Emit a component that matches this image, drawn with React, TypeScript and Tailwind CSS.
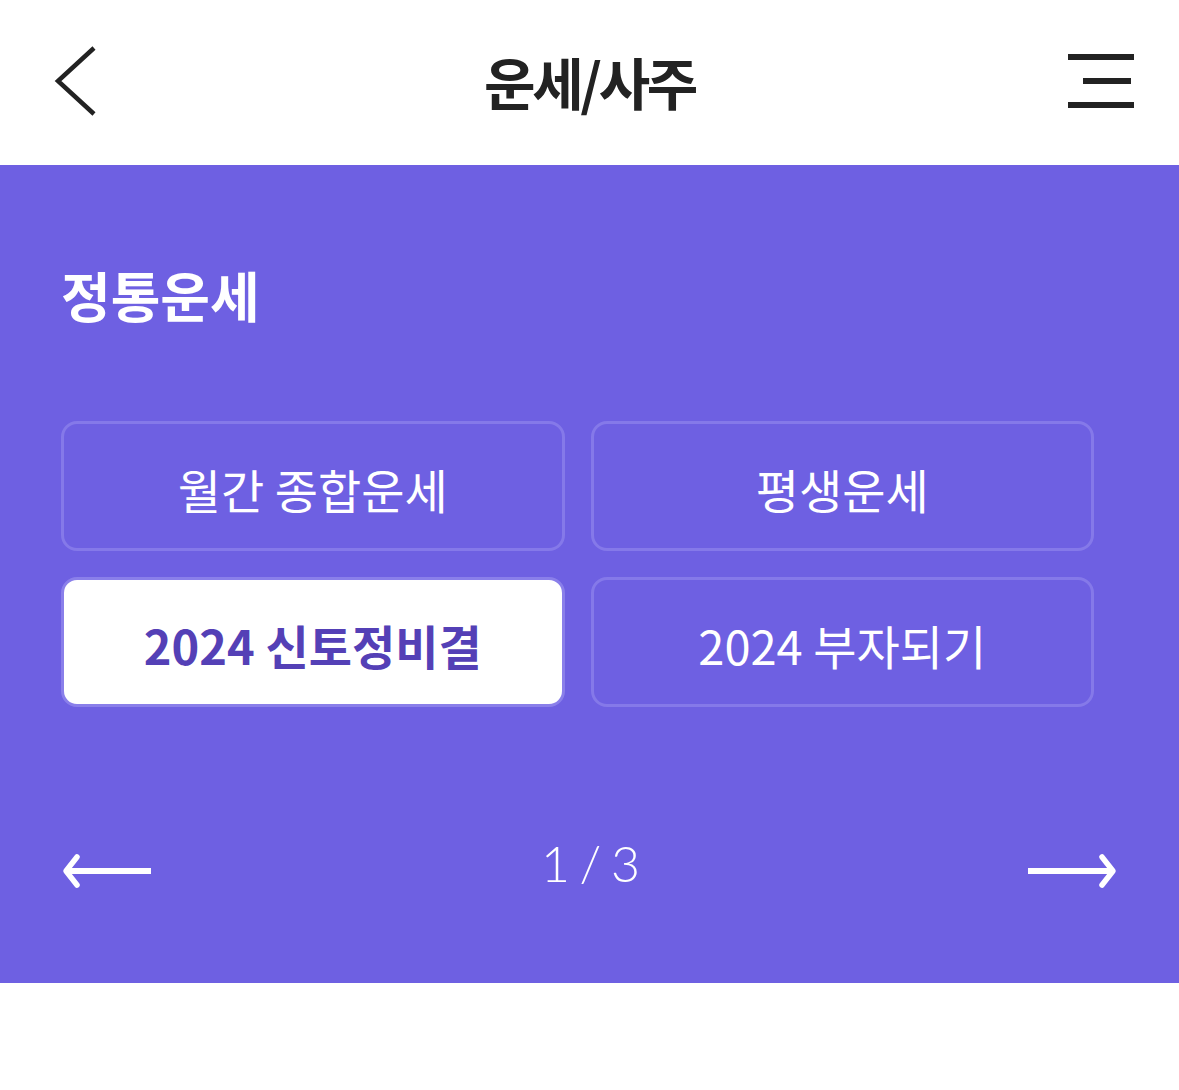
const KR = "font-['Noto_Sans_CJK_KR','Noto_Sans',sans-serif]";

const items = [
	{ label: "월간 종합운세", active: false },
	{ label: "평생운세", active: false },
	{ label: "2024 신토정비결", active: true },
	{ label: "2024 부자되기", active: false },
];

function Arrow({ dir }: { dir: "left" | "right" }) {
	return (
		<svg width="92" height="40" viewBox="0 0 92 40" className={dir === "right" ? "-scale-x-100" : ""}>
			<path d="M4 20 H90" stroke="#fff" strokeWidth="6" fill="none" />
			<path d="M16 6 L5 20 L16 34" stroke="#fff" strokeWidth="5.5" strokeLinecap="round" strokeLinejoin="round" fill="none" />
		</svg>
	);
}

export default function App() {
	return (
		<div className={`w-[1179px] h-[1090px] bg-white ${KR}`}>
			<header className="h-[165px] flex items-center justify-between px-[54px] relative">
				<svg width="44" height="72" viewBox="0 0 44 72" className="-mt-[2px]">
					<path d="M40 2 L4 35 L40 68" stroke="#222" strokeWidth="4.5" fill="none" />
				</svg>
				<h1 className="absolute left-0 right-0 text-center text-[56px] leading-none font-bold tracking-[-0.06em] text-[#222] -mt-[4px]">
					운세/사주
				</h1>
				<div className="flex flex-col items-end gap-[18px] w-[66px] -mt-[4px] mr-[-9px]">
					<span className="block h-[6px] w-[66px] bg-[#222]" />
					<span className="block h-[6px] w-[48px] bg-[#222] mr-[3px]" />
					<span className="block h-[6px] w-[66px] bg-[#222]" />
				</div>
			</header>

			<section className="h-[818px] bg-[#6e60e2] pl-[61px] pr-[85px] pt-[103px]">
				<h2 className="text-[54px] leading-none font-bold text-white">정통운세</h2>

				<div className="grid grid-cols-2 gap-[26px] mt-[99px]">
					{items.map((it) => (
						<button
							key={it.label}
							className={`h-[130px] rounded-[16px] border-[3px] flex items-center justify-center pt-[4px] text-[47px] leading-none ${
								it.active
									? "bg-white border-[#8a7fea] text-[#5440b6] font-bold"
									: "border-[#8579e9] text-white font-normal"
							}`}
						>
							{it.label}
						</button>
					))}
				</div>

				<div className="flex items-center justify-between mt-[128px] mr-[-24px]">
					<div className="mt-[16px]">
						<Arrow dir="left" />
					</div>
					<span className="font-['Lato',sans-serif] font-light text-[50px] leading-none tracking-[-0.04em] text-white">
						1 / 3
					</span>
					<div className="mt-[16px]">
						<Arrow dir="right" />
					</div>
				</div>
			</section>
		</div>
	);
}
